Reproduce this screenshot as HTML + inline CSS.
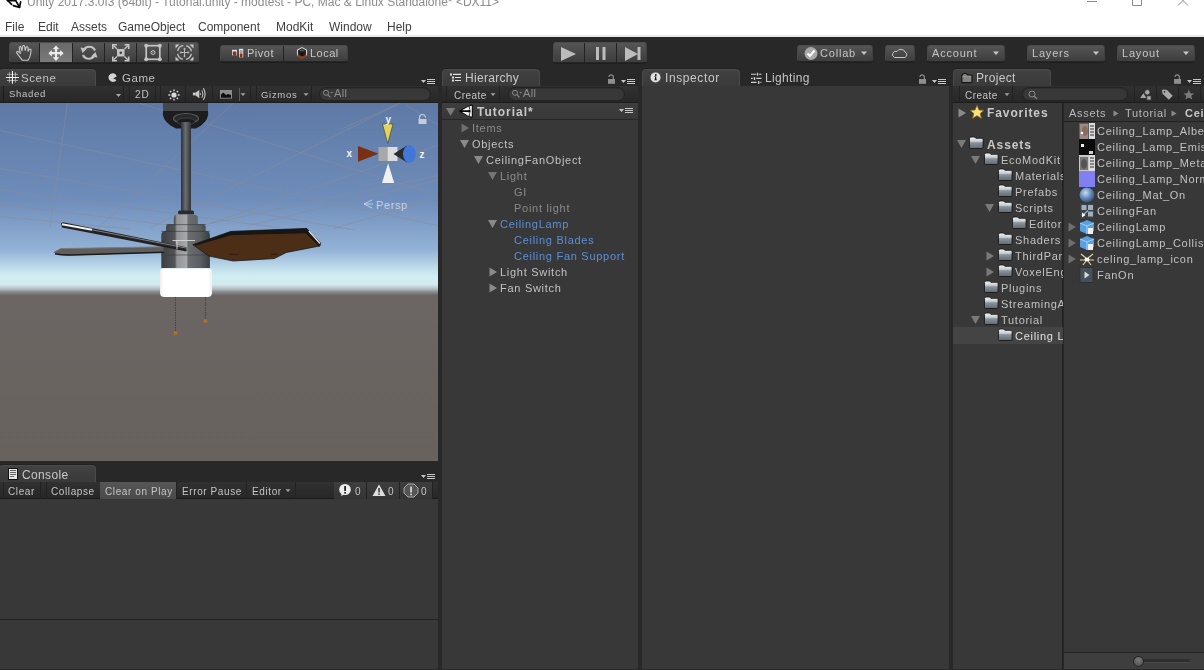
<!DOCTYPE html>
<html><head><meta charset="utf-8">
<style>
*{margin:0;padding:0;box-sizing:border-box}
body{-webkit-font-smoothing:antialiased}
html,body{width:1204px;height:670px;overflow:hidden;background:#282828;font-family:"Liberation Sans",sans-serif}
div,span{position:absolute}
span{will-change:transform}
.t{white-space:nowrap;font-size:11px;line-height:16px;letter-spacing:0.72px;color:#c2c2c2}
.s{white-space:nowrap;font-size:10px;line-height:16px;letter-spacing:0.45px;color:#c4c4c4}
#title{left:0;top:0;width:1204px;height:35px;background:#fff}
.menu{top:21px;font-size:12px;line-height:12px;color:#404040;white-space:nowrap}
.btn{background:linear-gradient(#555,#3d3d3d);border:1px solid #4c4c4c;border-bottom-color:#262626;border-left-color:#484848;border-right-color:#404040;border-radius:3px;box-shadow:0 1px 0 #1e1e1e}
.sep{width:1px;background:#222}
.tab{background:linear-gradient(#424242,#3a3a3a);border:1px solid #4a4a4a;border-bottom:none;border-radius:4px 4px 0 0;box-shadow:0 -1px 0 #222}
.ptb{background:linear-gradient(#313131,#272727);border-bottom:1px solid #1c1c1c}
.panel{background:#383838}
.hl{background:#222}
</style></head><body>
<div id="title"></div>
<div style="left:0;top:35px;width:1204px;height:2px;background:#eaeaea"></div>
<span class="menu" style="left:27px;top:-4px;color:#8c8c8c">Unity 2017.3.0f3 (64bit) - Tutorial.unity - modtest - PC, Mac &amp; Linux Standalone* &lt;DX11&gt;</span>
<span class="menu" style="left:5px">File</span>
<span class="menu" style="left:38px">Edit</span>
<span class="menu" style="left:71px">Assets</span>
<span class="menu" style="left:118px">GameObject</span>
<span class="menu" style="left:198px">Component</span>
<span class="menu" style="left:276px">ModKit</span>
<span class="menu" style="left:329px">Window</span>
<span class="menu" style="left:387px">Help</span>


<svg style="position:absolute;left:1080px;top:0" width="124" height="10">
 <path d="M7 1.5 H17" stroke="#8a8a8a" stroke-width="1"/>
 <path d="M52.5 -1 V5.5 H61.5 V-1" stroke="#8a8a8a" stroke-width="1" fill="none"/>
 <path d="M98 5.5 L103 0.5 L108 5.5 M103 0.5 L101 -1.5 M103 0.5 L105 -1.5" stroke="#8a8a8a" stroke-width="1" fill="none"/>
</svg>
<svg style="position:absolute;left:0;top:0" width="26" height="10"><g stroke="#0a0a0a" stroke-width="1.7" fill="none" stroke-linecap="round"><path d="M7.2 0 L11.6 4.4"/><path d="M7.5 0.6 H15.3"/><path d="M15.6 0.3 L19.4 7"/><path d="M20.6 1.8 L19.6 7.2"/><path d="M13.4 5.6 L19.5 7.4"/></g></svg>

<!-- TOOLBAR -->
<div style="left:0;top:37px;width:1204px;height:31px;background:#282828"></div>
<div class="btn" style="left:9px;top:42px;width:190px;height:21px"></div>
<div style="left:40px;top:43px;width:32px;height:19px;background:linear-gradient(#6a6a6a,#7a7a7a)"></div>
<div class="sep" style="left:39px;top:43px;height:19px"></div>
<div class="sep" style="left:72px;top:43px;height:19px"></div>
<div class="sep" style="left:104px;top:43px;height:19px"></div>
<div class="sep" style="left:136px;top:43px;height:19px"></div>
<div class="sep" style="left:168px;top:43px;height:19px"></div>
<svg style="position:absolute;left:0;top:37px" width="200" height="31" viewBox="0 37 200 31">
 <g fill="none" stroke="#c8c8c8" stroke-width="1.1" stroke-linejoin="round" stroke-linecap="round">
  <path d="M22.5 60.3 L16.8 53.2 Q16.3 51.5 18 51.3 L20.3 53.3 L19.2 47.6 Q19.6 46.2 20.8 46.8 L22 50.8 L22.6 46.2 Q23.5 45 24.6 46 L25.2 50.4 L26.3 47 Q27.3 46.4 28 47.4 L28 51.2 L29.5 49.2 Q30.7 48.8 31 50 L30.8 53 Q30 58 28 60.3 Z"/>
 </g>
 <path transform="translate(56 53.2) scale(1.1) translate(-56 -52.5)" d="M56 45.5 L59 48.8 L57 48.8 L57 51.5 L59.7 51.5 L59.7 49.5 L63 52.5 L59.7 55.5 L59.7 53.5 L57 53.5 L57 56.2 L59 56.2 L56 59.5 L53 56.2 L55 56.2 L55 53.5 L52.3 53.5 L52.3 55.5 L49 52.5 L52.3 49.5 L52.3 51.5 L55 51.5 L55 48.8 L53 48.8 Z" fill="#ececec"/>
 <g fill="none" stroke="#c2c2c2" stroke-width="2.2">
  <path d="M83.5 50.5 A6.3 6.3 0 0 1 95 50.5"/>
  <path d="M94.5 55 A6.3 6.3 0 0 1 83 55"/>
 </g>
 <path d="M80.5 47.5 L87 48.5 L82.5 53 Z M97.5 57.5 L91 56.5 L95.5 52 Z" fill="#c2c2c2"/>
 <rect x="117" y="49" width="7.5" height="7.5" fill="#c4c4c4"/><rect x="119.7" y="51.7" width="2.2" height="2.2" fill="#3a3a3a"/>
 <g stroke="#c4c4c4" stroke-width="1.4" fill="none">
  <path d="M117 49 L113.5 45.5 M124.5 49 L128 45.5 M117 56.5 L113.5 60 M124.5 56.5 L128 60"/>
  <path d="M112.8 49 V44.8 H117 M128.7 49 V44.8 H124.5 M112.8 56.5 V60.7 H117 M128.7 56.5 V60.7 H124.5" stroke-width="1.6"/>
 </g>
 <rect x="146.2" y="45.7" width="13.6" height="13.6" fill="none" stroke="#c4c4c4" stroke-width="1.7"/>
 <circle cx="146.2" cy="45.7" r="2" fill="#c4c4c4"/><circle cx="159.8" cy="45.7" r="2" fill="#c4c4c4"/>
 <circle cx="146.2" cy="59.3" r="2" fill="#c4c4c4"/><circle cx="159.8" cy="59.3" r="2" fill="#c4c4c4"/>
 <circle cx="153" cy="52.5" r="2" fill="none" stroke="#c4c4c4" stroke-width="1"/><circle cx="153" cy="52.5" r="0.6" fill="#c4c4c4"/>
 <circle cx="184.5" cy="52.5" r="7" fill="none" stroke="#b8b8b8" stroke-width="1.5" stroke-dasharray="8 3" stroke-dashoffset="-1.5"/>
 <path d="M184.5 48.5 V56.5 M180.5 52.5 H188.5" stroke="#b8b8b8" stroke-width="1"/>
 <path d="M184.5 47.5 L183 49.3 H186 Z M184.5 57.5 L183 55.7 H186 Z M179.5 52.5 L181.3 51 V54 Z M189.5 52.5 L187.7 51 V54 Z" fill="#b8b8b8"/>
 <path d="M175.5 44.5 H179.5 L175.5 48.5 Z M193.5 44.5 H189.5 L193.5 48.5 Z M175.5 60.5 H179.5 L175.5 56.5 Z M193.5 60.5 H189.5 L193.5 56.5 Z" fill="#c8c8c8"/>
</svg>
<div class="btn" style="left:220px;top:45px;width:128px;height:17px"></div>
<div class="sep" style="left:283px;top:46px;height:15px"></div>
<svg style="position:absolute;left:230px;top:46px" width="100" height="16">
 <rect x="2" y="3.8" width="5" height="5.5" fill="#e0e0e0"/><rect x="2.8" y="5.5" width="3.5" height="4" fill="#8a2e12"/>
 <rect x="9" y="2.8" width="4.2" height="8.6" fill="#e8e8e8"/><rect x="9.7" y="4" width="2.8" height="3" fill="#a0a0a0"/><rect x="9.7" y="7.4" width="2.8" height="4" fill="#8a2e12"/>
 <path d="M67.5 4 L72 1.6 L76.5 4 L76.5 9.5 L72 11.8 L67.5 9.5 Z" fill="#1e1e1e" stroke="#d4d4d4" stroke-width="1.1"/>
 <ellipse cx="72" cy="4.6" rx="2.6" ry="1" fill="#555"/>
 <path d="M72 5.8 V10" stroke="#111" stroke-width="1.5"/>
 <path d="M67.5 9.3 L72 11.6 L76.5 9.3" stroke="#9a3412" stroke-width="2" fill="none"/>
</svg>
<span class="t" style="left:247px;top:45px;font-size:11px;letter-spacing:0.5px;color:#c8c8c8">Pivot</span>
<span class="t" style="left:310px;top:45px;font-size:11px;letter-spacing:0.5px;color:#c8c8c8">Local</span>

<div class="btn" style="left:553px;top:42px;width:94px;height:21px"></div>
<div class="sep" style="left:584px;top:43px;height:19px"></div>
<div class="sep" style="left:616px;top:43px;height:19px"></div>
<svg style="position:absolute;left:553px;top:42px" width="94" height="21">
 <path d="M8 5 L23 12 L8 19 Z" fill="#bcbcbc"/>
 <rect x="43" y="5" width="3" height="13" fill="#bcbcbc"/><rect x="49.5" y="5" width="3" height="13" fill="#bcbcbc"/>
 <path d="M72 5 L85 12 L72 19 Z" fill="#bcbcbc"/><rect x="84.5" y="5" width="3" height="13" fill="#bcbcbc"/>
</svg>

<div class="btn" style="left:797px;top:45px;width:76px;height:17px"></div>
<svg style="position:absolute;left:804px;top:47px" width="14" height="14"><circle cx="7" cy="6.5" r="6.5" fill="#a8a8a8"/><path d="M3.5 6.5 L6 9 L10.5 3.5" stroke="#fff" stroke-width="2" fill="none"/></svg>
<span class="t" style="left:820px;top:45px;letter-spacing:0.8px;color:#c4c4c4">Collab</span>
<svg style="position:absolute;left:860px;top:51px" width="8" height="5"><path d="M1 0.5 H7 L4 4 Z" fill="#c8c8c8"/></svg>
<div class="btn" style="left:885px;top:45px;width:30px;height:17px"></div>
<svg style="position:absolute;left:891px;top:47px" width="18" height="13"><path d="M3.5 10.5 H14 A3 3 0 0 0 14 5 A4.5 4.5 0 0 0 6 4.5 A3 3 0 0 0 3.5 10.5 Z" fill="none" stroke="#c8c8c8" stroke-width="1"/></svg>
<div class="btn" style="left:927px;top:45px;width:78px;height:17px"></div>
<span class="t" style="left:932px;top:45px;letter-spacing:0.8px;color:#c4c4c4">Account</span>
<svg style="position:absolute;left:992px;top:51px" width="8" height="5"><path d="M1 0.5 H7 L4 4 Z" fill="#c8c8c8"/></svg>
<div class="btn" style="left:1027px;top:45px;width:78px;height:17px"></div>
<span class="t" style="left:1032px;top:45px;letter-spacing:0.8px;color:#c4c4c4">Layers</span>
<svg style="position:absolute;left:1092px;top:51px" width="8" height="5"><path d="M1 0.5 H7 L4 4 Z" fill="#c8c8c8"/></svg>
<div class="btn" style="left:1117px;top:45px;width:78px;height:17px"></div>
<span class="t" style="left:1122px;top:45px;letter-spacing:0.8px;color:#c4c4c4">Layout</span>
<svg style="position:absolute;left:1182px;top:51px" width="8" height="5"><path d="M1 0.5 H7 L4 4 Z" fill="#c8c8c8"/></svg>


<!-- PANEL BG -->
<div style="left:0;top:68px;width:1204px;height:602px;background:#282828"></div>
<!-- SCENE PANEL -->
<div class="tab" style="left:-1px;top:69px;width:97px;height:17px"></div>
<svg style="position:absolute;left:5px;top:70px" width="16" height="15"><path d="M4.46 2.2 V12.6 M10.43 2.2 V12.6 M2 4.4 H12.8 M2 10.5 H12.8" stroke="#a8a8a8" stroke-width="1"/><path d="M7.45 1 V13.8 M0.9 7.55 H14" stroke="#f0f0f0" stroke-width="1.1"/></svg>
<span class="t" style="left:21px;top:70px;font-size:11.5px;letter-spacing:0.55px;color:#c4c4c4">Scene</span>
<svg style="position:absolute;left:107.5px;top:73px" width="10" height="10"><path d="M4.5 0.2 A4.4 4.4 0 1 0 8.6 7 L5.2 5.6 L8.6 3.4 A4.4 4.4 0 0 0 4.5 0.2 Z" fill="#d4d4d4"/></svg>
<span class="t" style="left:122px;top:70px;font-size:11.5px;letter-spacing:0.55px;color:#c0c0c0">Game</span>
<svg style="position:absolute;left:421px;top:78px" width="14" height="7"><path d="M0 2 H5 L2.5 5 Z" fill="#c8c8c8"/><path d="M6 1.5 H14 M6 3.5 H14 M6 5.5 H14" stroke="#c8c8c8" stroke-width="1"/></svg>
<div class="ptb" style="left:0;top:86px;width:438px;height:17px"></div>
<div class="sep" style="left:3px;top:86px;height:17px;background:#1c1c1c"></div>
<span class="s" style="left:9px;top:86px;font-size:9.5px;letter-spacing:0.7px">Shaded</span>
<svg style="position:absolute;left:116px;top:94px" width="6" height="4"><path d="M0 0 H5 L2.5 3 Z" fill="#a8a8a8"/></svg>
<div class="sep" style="left:123px;top:86px;height:17px"></div>
<div class="sep" style="left:129px;top:86px;height:17px"></div>
<span class="s" style="left:134.5px;top:86.7px;font-size:10px;letter-spacing:1px">2D</span>
<div class="sep" style="left:155px;top:86px;height:17px"></div>
<div class="sep" style="left:160px;top:86px;height:17px"></div>
<svg style="position:absolute;left:166.5px;top:87.5px" width="14" height="14"><circle cx="7" cy="7" r="2.6" fill="#d8d8d8"/><path d="M7 1.4V3.2 M7 10.8V12.6 M1.4 7H3.2 M10.8 7H12.6 M3 3L4.2 4.2 M9.8 9.8L11 11 M3 11L4.2 9.8 M9.8 4.2L11 3" stroke="#d8d8d8" stroke-width="1.4"/></svg>
<div class="sep" style="left:185px;top:86px;height:17px"></div>
<svg style="position:absolute;left:191px;top:88px" width="16" height="14"><rect x="1.9" y="4.6" width="2.8" height="2.8" fill="#c8c8c8"/><path d="M4.6 4.6 L8.3 1.9 V10.3 L4.6 7.4 Z" fill="#c8c8c8"/><circle cx="9.5" cy="6.1" r="0.8" fill="#c8c8c8"/><path d="M10.9 2.4 Q13.1 6.1 10.9 9.8" stroke="#c8c8c8" stroke-width="1" fill="none"/><path d="M12.4 0.3 Q15.8 6.1 12.4 11.9" stroke="#c8c8c8" stroke-width="1.1" fill="none"/></svg>
<div class="sep" style="left:212px;top:86px;height:17px"></div>
<svg style="position:absolute;left:220px;top:90px" width="13" height="9"><rect x="0" y="0" width="12" height="8.6" fill="#8c8c8c"/><path d="M1 7.8 V4.5 L3.3 2.4 L6 5 L8 4 L11 5 V7.8 Z" fill="#0e0e0e"/></svg>
<div class="sep" style="left:238.5px;top:88px;height:13px;background:#5a5a5a"></div>
<svg style="position:absolute;left:240px;top:93px" width="7" height="4"><path d="M0.5 0.3 H5.5 L3 3 Z" fill="#a0a0a0"/></svg>
<div class="sep" style="left:249.5px;top:86px;height:17px"></div><div class="sep" style="left:255.5px;top:86px;height:17px"></div>
<span class="s" style="left:261px;top:86.7px;font-size:9.5px;letter-spacing:0.7px">Gizmos</span>
<svg style="position:absolute;left:303px;top:93px" width="7" height="4"><path d="M0.5 0.3 H5.5 L3 3 Z" fill="#a0a0a0"/></svg>
<div class="sep" style="left:311px;top:86px;height:17px"></div>
<div style="left:319px;top:87px;width:112px;height:14px;border-radius:7px;background:#383838;border:1px solid #232323;box-shadow:inset 0 1px 0 #2e2e2e"></div>
<svg style="position:absolute;left:322px;top:89px" width="14" height="10"><circle cx="4" cy="3.8" r="2.5" fill="none" stroke="#8a8a8a" stroke-width="1"/><path d="M5.8 5.7 L8.5 8.3" stroke="#8a8a8a" stroke-width="1.1"/><path d="M8.3 3 H11 L9.65 4.6 Z" fill="#8a8a8a"/></svg>
<span class="t" style="left:334px;top:85px;font-size:11px;letter-spacing:0.3px;color:#8e8e8e">All</span>

<!-- SCENE VIEW -->
<div style="left:0;top:103px;width:438px;height:358px;overflow:hidden;background:linear-gradient(#5e79a6 0%,#6f8dba 27%,#93b2d6 41%,#b5d2e6 45%,#c4e2ec 46.6%,#d3eef2 48.5%,#d2eaee 50.7%,#c3d3d6 51.35%,#aeb8bb 52.05%,#8e9296 52.65%,#767474 53.35%,#6b6663 53.8%,#68625e 100%)">
</div>


<svg style="position:absolute;left:0;top:103px" width="438" height="358" viewBox="0 103 438 358">
 <defs>
  <linearGradient id="rod" x1="0" x2="1"><stop offset="0" stop-color="#2e3034"/><stop offset="0.45" stop-color="#6a6d72"/><stop offset="1" stop-color="#303236"/></linearGradient>
  <linearGradient id="hous" gradientUnits="userSpaceOnUse" x1="161.3" y1="0" x2="209.9" y2="0"><stop offset="0" stop-color="#3c3f42"/><stop offset="0.28" stop-color="#525558"/><stop offset="0.32" stop-color="#929496"/><stop offset="0.52" stop-color="#a6a8aa"/><stop offset="0.55" stop-color="#6c6f72"/><stop offset="0.8" stop-color="#5c5f62"/><stop offset="1" stop-color="#3a3d40"/></linearGradient>
  <linearGradient id="glass" x1="0" y1="0" x2="1" y2="0"><stop offset="0" stop-color="#f0f0f0"/><stop offset="0.08" stop-color="#ffffff"/><stop offset="0.92" stop-color="#ffffff"/><stop offset="1" stop-color="#f0f0f0"/></linearGradient>
 </defs>
 <clipPath id="skyclip"><path d="M0 103 H438 V230 L0 230 Z"/></clipPath>
 <g stroke="#878d9a" stroke-opacity="0.65" stroke-width="0.9" fill="none" clip-path="url(#skyclip)">
  <path d="M67.5 103 L50 228"/>
  <path d="M139 103 L438 195"/>
  <path d="M0 130.6 L438 225.7"/>
  <path d="M0 168.4 L360 231"/>
  <path d="M0 189.9 L280 228"/>
  <path d="M0 204.2 L200 229"/>
  <path d="M0 216.5 L130 229"/>
  <path d="M98 228 L233.6 103"/>
  <path d="M150 228 L400.8 103"/>
  <path d="M209 223.7 L438 145"/>
  <path d="M200 225.7 L438 175.5"/>
  <path d="M248 225.7 L438 180"/>
  <path d="M334 228.5 L438 197.8"/>
  <path d="M340 129.6 L395.8 105"/>
  <path d="M405.7 105 L438 124.7"/>
 </g>
 <!-- canopy -->
 <rect x="163" y="103" width="45" height="8.5" fill="#44474c"/>
 <path d="M163 111 H208 Q209.5 119 201 125.5 L196 128.5 H176 L170.5 125.5 Q161.5 119 163 111 Z" fill="#1d1d1e"/>
 <ellipse cx="186" cy="118.5" rx="12.5" ry="5" fill="#29292b" stroke="#56595e" stroke-width="1.1"/>
 <ellipse cx="186" cy="121.5" rx="9" ry="3.5" fill="#1d1d1e" stroke="#3e4044" stroke-width="1"/>
 <rect x="181" y="122" width="10" height="92" fill="url(#rod)"/>
 <!-- housing -->
 <rect x="178" y="210.5" width="16" height="4" rx="1.5" fill="#2a2b2d"/>
 <path d="M173.8 224.5 V218 Q173.8 214.5 178 214.5 H193.6 Q197.8 214.5 197.8 218 V224.5 Z" fill="url(#hous)"/>
 <path d="M166 231.3 V227.5 Q166 224.3 170 224.3 H201.7 Q205.7 224.3 205.7 227.5 V231.3 Z" fill="url(#hous)"/>
 <path d="M161.3 268 V235.5 Q161.3 231.1 166 231.1 H205.2 Q209.9 231.1 209.9 235.5 V268 Z" fill="url(#hous)"/>
 <path d="M161.3 255 H209.9" stroke="#3a3c3e" stroke-width="1" opacity="0.6"/>
 <path d="M166 224.6 H205.7 M161.3 231.4 H209.9" stroke="#2e3032" stroke-width="0.8" opacity="0.7"/>
 <!-- left blades -->
 <path d="M53.5 252.3 L60.5 248.6 L163.5 246.8 L164 252.5 L72 255.3 Q58 255.3 53.5 252.3 Z" fill="#5f5e5d"/>
 <path d="M60.5 248.6 L163.5 246.8" stroke="#7c7b7a" stroke-width="1"/>
 <path d="M55 253.8 Q60 255 72 255 L164 252.3" stroke="#1a1a1a" stroke-width="1.4" fill="none"/>
 <path d="M61 223.2 L63 222.3 L186.5 247.3 L186.5 251.5 L62 227.5 Z" fill="#222"/>
 <path d="M62 224.2 L92 229.8" stroke="#f2f2f2" stroke-width="2"/>
 <path d="M92 229.8 L186 248" stroke="#8c8c8c" stroke-width="0.9"/>
 <path d="M172.5 240.5 H195" stroke="#d8d8d8" stroke-width="0.9"/>
 <path d="M177 240.5 V249" stroke="#e8e8e8" stroke-width="0.9"/>
 <!-- right blade -->
 <path d="M192.8 244.7 L230.8 231.4 L306.7 228.4 L320.5 242.9 L320 245.9 L286.2 252.5 L274.2 258.6 L233.2 261 L209.1 256.1 Z" fill="#4c2e16" stroke="#1a1a1a" stroke-width="0.8" stroke-linejoin="round"/>
 <path d="M192.8 244.7 L230.8 231.4 L306.7 228.4 L320.5 242.9 L319.5 246.5 L305.5 233.3 L230.8 235.2 L196 245.5 Z" fill="#161616"/>
 <path d="M308.8 231 L320 243.5" stroke="#e6e6e6" stroke-width="1.3"/>
 <path d="M229 254.3 H238.6 M271 254.3 H277.8" stroke="#2a1a10" stroke-width="0.9"/>
 <!-- glass -->
 <path d="M160 272 Q160 268.5 163.5 268.5 H208.5 Q212 268.5 212 272 V292.5 Q212 297 207.5 297 H164.5 Q160 297 160 292.5 Z" fill="url(#glass)"/>
 <!-- chains -->
 <path d="M175.5 297 V332 M205.5 297 V320" stroke="#3a3a3a" stroke-width="0.8" stroke-dasharray="1.5 1"/>
 <circle cx="175.5" cy="333" r="2" fill="#b07030"/>
 <circle cx="205.5" cy="321" r="2" fill="#b07030"/>
 <!-- gizmo -->
 <path d="M382.5 124 L393 124 L387.7 143.5 Z" fill="#e6d35a" stroke="#3a3a28" stroke-width="0.6"/>
 <path d="M358 146 L378.6 153.8 L358 161.7 Z" fill="#7a2e14"/>
 <rect x="378.5" y="147" width="9" height="14" fill="#a8a8a8"/>
 <rect x="387.5" y="147" width="10" height="14" fill="#dcdcdc"/>
 <path d="M393.5 154 L407 145.5 L407 162.5 Z" fill="#2a2a2a"/>
 <ellipse cx="409.3" cy="154" rx="6.3" ry="9" fill="#3f78d8"/>
 <path d="M382 183 L394.2 183 L388.1 163.3 Z" fill="#f0f0f0"/>
 <g font-family="Liberation Sans" font-weight="bold" font-size="10" fill="#f4f4f4">
  <text x="385.5" y="122.5">y</text><text x="346.5" y="157">x</text><text x="419.5" y="157.5">z</text>
 </g>
 <path d="M419.5 119 V117.5 A3 3 0 0 1 425.5 117.5" stroke="#c8ccd4" stroke-width="1.2" fill="none"/>
 <rect x="418.5" y="119" width="8" height="5" fill="#c8ccd4"/>
 <path d="M372 200 L364 204 L372 208 M364 204 H373" stroke="#c8d4e4" stroke-width="0.9" fill="none"/>
 <text x="376" y="208.5" font-family="Liberation Sans" font-size="11" letter-spacing="0.6" fill="#c8d0dc">Persp</text>
</svg>

<!-- CONSOLE -->
<div class="tab" style="left:-1px;top:465px;width:97px;height:17px"></div>
<svg style="position:absolute;left:8px;top:468px" width="10" height="12"><rect x="0.5" y="0.5" width="9" height="11" fill="#e6e6e6" stroke="#111" stroke-width="1"/><path d="M2 2.5 H8 M2 4.5 H8 M2 6.5 H8 M2 8.5 H6" stroke="#555" stroke-width="0.9"/></svg>
<span class="t" style="left:22px;top:467px;font-size:12px;letter-spacing:0.35px;color:#c8c8c8">Console</span>
<svg style="position:absolute;left:421px;top:473px" width="14" height="7"><path d="M0 2 H5 L2.5 5 Z" fill="#c8c8c8"/><path d="M6 1.5 H14 M6 3.5 H14 M6 5.5 H14" stroke="#c8c8c8" stroke-width="1"/></svg>
<div class="ptb" style="left:0;top:482px;width:438px;height:17px"></div>
<div class="sep" style="left:3px;top:482px;height:17px"></div>
<span class="s" style="left:8px;top:483.5px;font-size:10px;letter-spacing:0.6px">Clear</span>
<div class="sep" style="left:40px;top:482px;height:17px"></div>
<div class="sep" style="left:46px;top:482px;height:17px"></div>
<span class="s" style="left:51px;top:483.5px;font-size:10px;letter-spacing:0.6px">Collapse</span>
<div style="left:100px;top:482px;width:76px;height:17px;background:linear-gradient(#565656,#4a4a4a)"></div>
<span class="s" style="left:105px;top:483.5px;font-size:10px;letter-spacing:0.6px">Clear on Play</span>
<div class="sep" style="left:176px;top:482px;height:17px"></div>
<span class="s" style="left:182px;top:483.5px;font-size:10px;letter-spacing:0.6px">Error Pause</span>
<div class="sep" style="left:246px;top:482px;height:17px"></div>
<span class="s" style="left:252px;top:483.5px;font-size:10px;letter-spacing:0.6px">Editor</span>
<svg style="position:absolute;left:285px;top:489px" width="7" height="4"><path d="M0.5 0.3 H5.5 L3 3 Z" fill="#a0a0a0"/></svg>
<div class="sep" style="left:295px;top:482px;height:17px"></div>
<div style="left:334px;top:482px;width:98px;height:17px;background:linear-gradient(#3e3e3e,#343434)"></div>
<div class="sep" style="left:366px;top:482px;height:17px"></div>
<div class="sep" style="left:399px;top:482px;height:17px"></div>
<div class="sep" style="left:432px;top:482px;height:17px"></div>
<svg style="position:absolute;left:338px;top:483px" width="94" height="15">
 <ellipse cx="7" cy="6.5" rx="5.8" ry="5.5" fill="#eee"/><path d="M4 10 L3 13 L7 11 Z" fill="#eee"/><rect x="6.2" y="3" width="1.8" height="5" fill="#222"/><rect x="6.2" y="9" width="1.8" height="1.6" fill="#222"/>
 <path d="M41 1.5 L47.5 13 H34.5 Z" fill="#ddd"/><rect x="40.3" y="5" width="1.5" height="4.5" fill="#333"/><rect x="40.3" y="10.5" width="1.5" height="1.4" fill="#333"/>
 <path d="M70 1 H76 L80 5 V10 L76 14 H70 L66 10 V5 Z" fill="#555" stroke="#aaa" stroke-width="1"/><rect x="72.3" y="3.5" width="1.5" height="6" fill="#eee"/><rect x="72.3" y="10.7" width="1.5" height="1.5" fill="#eee"/>
</svg>
<span class="s" style="left:355px;top:483.5px;font-size:10px">0</span>
<span class="s" style="left:388px;top:483.5px;font-size:10px">0</span>
<span class="s" style="left:421px;top:483.5px;font-size:10px">0</span>
<div class="panel" style="left:0;top:499px;width:438px;height:170px"></div>
<div style="left:0;top:619px;width:438px;height:1px;background:#222"></div>

<!-- HIERARCHY -->
<div class="tab" style="left:442px;top:69px;width:98px;height:17px"></div>
<svg style="position:absolute;left:449px;top:72px" width="14" height="11"><path d="M1 1.4h2v2h-2z M3 4.5h2v2h-2z M3 7.5h2v2h-2z" fill="#e0e0e0"/><path d="M4 2.4 H12 M6 5.5 H12 M6 8.5 H12" stroke="#e0e0e0" stroke-width="1.2"/></svg>
<span class="t" style="left:465px;top:69.8px;font-size:12px;letter-spacing:0.3px;color:#c8c8c8">Hierarchy</span>
<svg style="position:absolute;left:607px;top:73px" width="10" height="12"><path d="M1.9 3.9 A2.3 2.3 0 0 1 6.3 3.3 V6.5" stroke="#8e8e8e" stroke-width="1.2" fill="none"/><rect x="1" y="6" width="7" height="4.8" fill="#8e8e8e"/></svg>
<svg style="position:absolute;left:621px;top:78px" width="14" height="7"><path d="M0 2 H5 L2.5 5 Z" fill="#c8c8c8"/><path d="M6 1.5 H14 M6 3.5 H14 M6 5.5 H14" stroke="#c8c8c8" stroke-width="1"/></svg>
<div class="ptb" style="left:442px;top:86px;width:196px;height:17px"></div>
<div class="sep" style="left:446px;top:86px;height:17px"></div>
<span class="s" style="left:454px;top:87.5px;font-size:10px;letter-spacing:0.45px">Create</span>
<svg style="position:absolute;left:490px;top:93px" width="7" height="4"><path d="M0.5 0.3 H5.5 L3 3 Z" fill="#a0a0a0"/></svg>
<div class="sep" style="left:499px;top:86px;height:17px"></div>
<div style="left:508px;top:87px;width:117px;height:14px;border-radius:7px;background:#383838;border:1px solid #232323;box-shadow:inset 0 1px 0 #2e2e2e"></div>
<svg style="position:absolute;left:511px;top:89px" width="14" height="10"><circle cx="4" cy="3.8" r="2.5" fill="none" stroke="#8a8a8a" stroke-width="1"/><path d="M5.8 5.7 L8.5 8.3" stroke="#8a8a8a" stroke-width="1.1"/><path d="M8.3 3 H11 L9.65 4.6 Z" fill="#8a8a8a"/></svg>
<span class="t" style="left:523px;top:85px;font-size:11px;letter-spacing:0.3px;color:#8e8e8e">All</span>
<div class="panel" style="left:442px;top:103px;width:196px;height:566px"></div>
<div style="left:442px;top:103px;width:196px;height:17px;background:linear-gradient(#3e3e3e,#383838);border-bottom:1px solid #262626"></div>


<!-- HIERARCHY ROWS -->
<svg style="position:absolute;left:445px;top:107px" width="12" height="11"><path d="M1 1 H10.2 L5.6 8.8 Z" fill="#7a7a7a"/></svg>
<svg style="position:absolute;left:458px;top:103px" width="17" height="17"><path d="M1.3 8.2 Q1 7.7 1.6 7.3 L13.2 1.6 Q14.8 1 14.8 2.6 V13.8 Q14.8 15.4 13.2 14.8 L1.6 9.1 Q1 8.7 1.3 8.2 Z" fill="#0a0a0a"/><path d="M4 7.3 L10.5 3.5 L11.8 7 L8.6 7.3 Z M4 9.1 L8.6 9.1 L11.8 9.5 L10.5 13 Z M11.5 3.2 L13.8 2.8 L13.8 13.6 L11.5 13.2 L12.6 8.2 Z" fill="#f4f4f4"/></svg>
<span class="t" style="left:477px;top:104px;font-size:12px;font-weight:bold;letter-spacing:1px;color:#c8c8c8">Tutorial*</span>
<svg style="position:absolute;left:619px;top:107px" width="14" height="7"><path d="M0 2 H5 L2.5 5 Z" fill="#c8c8c8"/><path d="M6 1.5 H14 M6 3.5 H14 M6 5.5 H14" stroke="#c8c8c8" stroke-width="1"/></svg>
<svg style="position:absolute;left:460px;top:123px" width="10" height="10"><path d="M1.5 0.5 V9.5 L9 5 Z" fill="#6e6e6e"/></svg>
<span class="t" style="left:472px;top:120px;color:#8a8a8a">Items</span>
<svg style="position:absolute;left:459px;top:139px" width="11" height="10"><path d="M1 1 H10 L5.5 9 Z" fill="#8a8a8a"/></svg>
<span class="t" style="left:472px;top:136px;color:#c2c2c2">Objects</span>
<svg style="position:absolute;left:473px;top:155px" width="11" height="10"><path d="M1 1 H10 L5.5 9 Z" fill="#8a8a8a"/></svg>
<span class="t" style="left:486px;top:152px;color:#c2c2c2">CeilingFanObject</span>
<svg style="position:absolute;left:487px;top:171px" width="11" height="10"><path d="M1 1 H10 L5.5 9 Z" fill="#757575"/></svg>
<span class="t" style="left:500px;top:168px;color:#8e8e8e">Light</span>
<span class="t" style="left:514px;top:184px;color:#8a8a8a">GI</span>
<span class="t" style="left:514px;top:200px;color:#8a8a8a">Point light</span>
<svg style="position:absolute;left:487px;top:219px" width="11" height="10"><path d="M1 1 H10 L5.5 9 Z" fill="#8a8a8a"/></svg>
<span class="t" style="left:500px;top:216px;color:#5a8fd8">CeilingLamp</span>
<span class="t" style="left:514px;top:232px;color:#5a8fd8">Ceiling Blades</span>
<span class="t" style="left:514px;top:248px;color:#5a8fd8">Ceiling Fan Support</span>
<svg style="position:absolute;left:488px;top:267px" width="10" height="10"><path d="M1.5 0.5 V9.5 L9 5 Z" fill="#8a8a8a"/></svg>
<span class="t" style="left:500px;top:264px;color:#c2c2c2">Light Switch</span>
<svg style="position:absolute;left:488px;top:283px" width="10" height="10"><path d="M1.5 0.5 V9.5 L9 5 Z" fill="#8a8a8a"/></svg>
<span class="t" style="left:500px;top:280px;color:#c2c2c2">Fan Switch</span>

<!-- INSPECTOR -->
<div class="tab" style="left:642px;top:69px;width:98px;height:17px"></div>
<svg style="position:absolute;left:650px;top:72px" width="12" height="12"><circle cx="5.5" cy="5.4" r="5" fill="#dedede"/><path d="M4.3 4.4 H6.3 V7.6 H7 V8.3 H4.3 V7.6 H5 V5.1 H4.3 Z" fill="#111"/><circle cx="5.8" cy="3" r="0.9" fill="#111"/></svg>
<span class="t" style="left:665px;top:69.8px;font-size:12px;letter-spacing:0.6px;color:#c8c8c8">Inspector</span>
<svg style="position:absolute;left:750px;top:72px" width="13" height="13"><g stroke="#d0d0d0" stroke-width="1.1"><path d="M1 2.2 H6 M9 2.2 H11.5 M1 6.4 H2.8 M6.3 6.4 H11.5 M1 10.4 H6.6 M10.4 10.4 H11.4"/><path d="M7.5 0.8 V3.8 M4.5 5 V8 M8.7 9 V12" stroke-width="1.3"/></g></svg>
<span class="t" style="left:765px;top:69.8px;font-size:12px;letter-spacing:0.35px;color:#c4c4c4">Lighting</span>
<svg style="position:absolute;left:918px;top:73px" width="10" height="12"><path d="M1.9 3.9 A2.3 2.3 0 0 1 6.3 3.3 V6.5" stroke="#8e8e8e" stroke-width="1.2" fill="none"/><rect x="1" y="6" width="7" height="4.8" fill="#8e8e8e"/></svg>
<svg style="position:absolute;left:932px;top:78px" width="14" height="7"><path d="M0 2 H5 L2.5 5 Z" fill="#c8c8c8"/><path d="M6 1.5 H14 M6 3.5 H14 M6 5.5 H14" stroke="#c8c8c8" stroke-width="1"/></svg>
<div class="panel" style="left:642px;top:86px;width:307px;height:583px"></div>

<!-- PROJECT -->
<div class="tab" style="left:953px;top:69px;width:98px;height:17px"></div>
<svg style="position:absolute;left:960px;top:72px" width="14" height="12"><path d="M1.8 3.5 Q2.5 1.5 4.5 1.5 H5.5 Q6.5 1.5 7.5 3 H11 Q12 3 12 4 V9.8 Q12 10.6 11 10.6 H2.5 Q1.8 10.6 1.8 9.8 Z" fill="#86827e" stroke="#141414" stroke-width="1.2"/><path d="M2.5 4.8 H11.3" stroke="#a8a8a8" stroke-width="0.6"/></svg>
<span class="t" style="left:976px;top:69.8px;font-size:12px;letter-spacing:0.35px;color:#c8c8c8">Project</span>
<svg style="position:absolute;left:1173px;top:73px" width="10" height="12"><path d="M1.9 3.9 A2.3 2.3 0 0 1 6.3 3.3 V6.5" stroke="#8e8e8e" stroke-width="1.2" fill="none"/><rect x="1" y="6" width="7" height="4.8" fill="#8e8e8e"/></svg>
<svg style="position:absolute;left:1187px;top:78px" width="14" height="7"><path d="M0 2 H5 L2.5 5 Z" fill="#c8c8c8"/><path d="M6 1.5 H14 M6 3.5 H14 M6 5.5 H14" stroke="#c8c8c8" stroke-width="1"/></svg>
<div class="ptb" style="left:953px;top:86px;width:251px;height:17px"></div>
<div class="sep" style="left:959px;top:86px;height:17px"></div>
<span class="s" style="left:965px;top:87.5px;font-size:10px;letter-spacing:0.45px">Create</span>
<svg style="position:absolute;left:1004px;top:93px" width="7" height="4"><path d="M0.5 0.3 H5.5 L3 3 Z" fill="#a0a0a0"/></svg>
<div class="sep" style="left:1012px;top:86px;height:17px"></div>
<div style="left:1022px;top:87px;width:106px;height:14px;border-radius:7px;background:#383838;border:1px solid #232323;box-shadow:inset 0 1px 0 #2e2e2e"></div>
<svg style="position:absolute;left:1028px;top:90px" width="10" height="10"><circle cx="4" cy="4" r="3" fill="none" stroke="#8a8a8a" stroke-width="1"/><path d="M6 6 L9 9" stroke="#8a8a8a" stroke-width="1.2"/></svg>
<div class="sep" style="left:1134px;top:86px;height:17px"></div>
<div class="sep" style="left:1156px;top:86px;height:17px"></div>
<div class="sep" style="left:1178px;top:86px;height:17px"></div><div class="sep" style="left:1200px;top:86px;height:17px"></div>
<svg style="position:absolute;left:1130px;top:84px" width="74" height="20">
 <path d="M10.2 13.9 L13.4 9.3 L16.4 13.9 Z" fill="#a8a8a8"/>
 <circle cx="17.3" cy="8.3" r="2.7" fill="#a8a8a8" stroke="#2d2d2d" stroke-width="0.8"/>
 <rect x="16.8" y="11.8" width="4.3" height="4.3" fill="#a8a8a8" stroke="#2d2d2d" stroke-width="0.8"/>
 <path d="M31.8 6.5 L33.5 5.5 L37 6 L42.7 11.8 L38.8 15.8 L32.6 9.8 Z" fill="#a8a8a8"/><circle cx="34.5" cy="7.8" r="0.9" fill="#2b2b2b"/>
 <path d="M58.8 5.5 L60.3 9.2 L64.2 9.4 L61.2 11.8 L62.3 15.6 L58.8 13.4 L55.3 15.6 L56.4 11.8 L53.4 9.4 L57.3 9.2 Z" fill="#7c7c7c"/>
</svg>
<div class="panel" style="left:953px;top:103px;width:110px;height:566px"></div>

<div class="panel" style="left:1064px;top:103px;width:140px;height:549px"></div>
<div style="left:1064px;top:103px;width:140px;height:19px;background:#353535;border-bottom:1px solid #222"></div>
<div style="left:1064px;top:652px;width:140px;height:17px;background:#3e3e3e;border-top:1px solid #222"></div>
<div style="left:1062px;top:103px;width:1px;height:566px;background:#222"></div>
<div style="left:1138px;top:659px;width:52px;height:4px;border-radius:2px;background:#2e2e2e;border-bottom:1px solid #4a4a4a"></div>
<div style="left:1133px;top:655.5px;width:11px;height:11px;border-radius:50%;background:radial-gradient(circle at 50% 30%,#7a7a7a,#4a4a4a);border:1px solid #222"></div>
<div style="left:953px;top:327px;width:110px;height:17px;background:#444"></div>

<svg width="0" height="0" style="position:absolute"><defs><linearGradient id="fg" x1="0" y1="0" x2="0" y2="1"><stop offset="0" stop-color="#f0f0f0"/><stop offset="0.35" stop-color="#d0d4d8"/><stop offset="0.5" stop-color="#8a949c"/><stop offset="1" stop-color="#5e6a74"/></linearGradient></defs></svg>
<svg style="position:absolute;left:957px;top:108px" width="10" height="10"><path d="M1.5 0.5 V9.5 L9 5 Z" fill="#8a8a8a"/></svg>
<svg style="position:absolute;left:969px;top:104px" width="16" height="15"><path d="M8 1 L10 6 L15 6.3 L11.2 9.5 L12.5 14.5 L8 11.7 L3.5 14.5 L4.8 9.5 L1 6.3 L6 6 Z" fill="#f5e27a" stroke="#8a5a1a" stroke-width="0.8"/></svg>
<span class="t" style="left:987px;top:105px;font-size:12px;font-weight:bold;letter-spacing:0.9px;color:#c8c8c8">Favorites</span>
<svg style="position:absolute;left:956px;top:139px" width="11" height="10"><path d="M1 1 H10 L5.5 9 Z" fill="#7a7a7a"/></svg>
<svg style="position:absolute;left:969px;top:136px" width="15" height="13"><path d="M0.5 2.5 Q0.5 1 2 1 H5.5 L6.8 2.3 H13 Q14 2.3 14 3.3 V11.5 Q14 12.5 13 12.5 H1.5 Q0.5 12.5 0.5 11.5 Z" fill="url(#fg)" stroke="#111" stroke-width="0.8"/><path d="M1 5 H13.5" stroke="#ccc" stroke-width="0.8"/></svg>
<span class="t" style="left:987px;top:136.5px;font-size:12px;font-weight:bold;letter-spacing:0.9px;color:#c8c8c8">Assets</span>
<div style="left:953px;top:103px;width:110px;height:566px;overflow:hidden">
<svg style="position:absolute;left:17px;top:52px" width="11" height="10"><path d="M1 1 H10 L5.5 9 Z" fill="#7a7a7a"/></svg>
<svg style="position:absolute;left:31px;top:49px" width="15" height="13"><path d="M0.5 2.5 Q0.5 1 2 1 H5.5 L6.8 2.3 H13 Q14 2.3 14 3.3 V11.5 Q14 12.5 13 12.5 H1.5 Q0.5 12.5 0.5 11.5 Z" fill="url(#fg)" stroke="#111" stroke-width="0.8"/><path d="M1 5 H13.5" stroke="#ccc" stroke-width="0.8"/></svg>
<span class="t" style="left:48px;top:49px;color:#c2c2c2">EcoModKit</span>
<svg style="position:absolute;left:45px;top:65px" width="15" height="13"><path d="M0.5 2.5 Q0.5 1 2 1 H5.5 L6.8 2.3 H13 Q14 2.3 14 3.3 V11.5 Q14 12.5 13 12.5 H1.5 Q0.5 12.5 0.5 11.5 Z" fill="url(#fg)" stroke="#111" stroke-width="0.8"/><path d="M1 5 H13.5" stroke="#ccc" stroke-width="0.8"/></svg>
<span class="t" style="left:62px;top:65px;color:#c2c2c2">Materials</span>
<svg style="position:absolute;left:45px;top:81px" width="15" height="13"><path d="M0.5 2.5 Q0.5 1 2 1 H5.5 L6.8 2.3 H13 Q14 2.3 14 3.3 V11.5 Q14 12.5 13 12.5 H1.5 Q0.5 12.5 0.5 11.5 Z" fill="url(#fg)" stroke="#111" stroke-width="0.8"/><path d="M1 5 H13.5" stroke="#ccc" stroke-width="0.8"/></svg>
<span class="t" style="left:62px;top:81px;color:#c2c2c2">Prefabs</span>
<svg style="position:absolute;left:31px;top:100px" width="11" height="10"><path d="M1 1 H10 L5.5 9 Z" fill="#7a7a7a"/></svg>
<svg style="position:absolute;left:45px;top:97px" width="15" height="13"><path d="M0.5 2.5 Q0.5 1 2 1 H5.5 L6.8 2.3 H13 Q14 2.3 14 3.3 V11.5 Q14 12.5 13 12.5 H1.5 Q0.5 12.5 0.5 11.5 Z" fill="url(#fg)" stroke="#111" stroke-width="0.8"/><path d="M1 5 H13.5" stroke="#ccc" stroke-width="0.8"/></svg>
<span class="t" style="left:62px;top:97px;color:#c2c2c2">Scripts</span>
<svg style="position:absolute;left:59px;top:113px" width="15" height="13"><path d="M0.5 2.5 Q0.5 1 2 1 H5.5 L6.8 2.3 H13 Q14 2.3 14 3.3 V11.5 Q14 12.5 13 12.5 H1.5 Q0.5 12.5 0.5 11.5 Z" fill="url(#fg)" stroke="#111" stroke-width="0.8"/><path d="M1 5 H13.5" stroke="#ccc" stroke-width="0.8"/></svg>
<span class="t" style="left:76px;top:113px;color:#c2c2c2">Editor</span>
<svg style="position:absolute;left:45px;top:129px" width="15" height="13"><path d="M0.5 2.5 Q0.5 1 2 1 H5.5 L6.8 2.3 H13 Q14 2.3 14 3.3 V11.5 Q14 12.5 13 12.5 H1.5 Q0.5 12.5 0.5 11.5 Z" fill="url(#fg)" stroke="#111" stroke-width="0.8"/><path d="M1 5 H13.5" stroke="#ccc" stroke-width="0.8"/></svg>
<span class="t" style="left:62px;top:129px;color:#c2c2c2">Shaders</span>
<svg style="position:absolute;left:32px;top:148px" width="10" height="10"><path d="M1.5 0.5 V9.5 L9 5 Z" fill="#7a7a7a"/></svg>
<svg style="position:absolute;left:45px;top:145px" width="15" height="13"><path d="M0.5 2.5 Q0.5 1 2 1 H5.5 L6.8 2.3 H13 Q14 2.3 14 3.3 V11.5 Q14 12.5 13 12.5 H1.5 Q0.5 12.5 0.5 11.5 Z" fill="url(#fg)" stroke="#111" stroke-width="0.8"/><path d="M1 5 H13.5" stroke="#ccc" stroke-width="0.8"/></svg>
<span class="t" style="left:62px;top:145px;color:#c2c2c2">ThirdParty</span>
<svg style="position:absolute;left:32px;top:164px" width="10" height="10"><path d="M1.5 0.5 V9.5 L9 5 Z" fill="#7a7a7a"/></svg>
<svg style="position:absolute;left:45px;top:161px" width="15" height="13"><path d="M0.5 2.5 Q0.5 1 2 1 H5.5 L6.8 2.3 H13 Q14 2.3 14 3.3 V11.5 Q14 12.5 13 12.5 H1.5 Q0.5 12.5 0.5 11.5 Z" fill="url(#fg)" stroke="#111" stroke-width="0.8"/><path d="M1 5 H13.5" stroke="#ccc" stroke-width="0.8"/></svg>
<span class="t" style="left:62px;top:161px;color:#c2c2c2">VoxelEngine</span>
<svg style="position:absolute;left:31px;top:177px" width="15" height="13"><path d="M0.5 2.5 Q0.5 1 2 1 H5.5 L6.8 2.3 H13 Q14 2.3 14 3.3 V11.5 Q14 12.5 13 12.5 H1.5 Q0.5 12.5 0.5 11.5 Z" fill="url(#fg)" stroke="#111" stroke-width="0.8"/><path d="M1 5 H13.5" stroke="#ccc" stroke-width="0.8"/></svg>
<span class="t" style="left:48px;top:177px;color:#c2c2c2">Plugins</span>
<svg style="position:absolute;left:31px;top:193px" width="15" height="13"><path d="M0.5 2.5 Q0.5 1 2 1 H5.5 L6.8 2.3 H13 Q14 2.3 14 3.3 V11.5 Q14 12.5 13 12.5 H1.5 Q0.5 12.5 0.5 11.5 Z" fill="url(#fg)" stroke="#111" stroke-width="0.8"/><path d="M1 5 H13.5" stroke="#ccc" stroke-width="0.8"/></svg>
<span class="t" style="left:48px;top:193px;color:#c2c2c2">StreamingAssets</span>
<svg style="position:absolute;left:17px;top:212px" width="11" height="10"><path d="M1 1 H10 L5.5 9 Z" fill="#7a7a7a"/></svg>
<svg style="position:absolute;left:31px;top:209px" width="15" height="13"><path d="M0.5 2.5 Q0.5 1 2 1 H5.5 L6.8 2.3 H13 Q14 2.3 14 3.3 V11.5 Q14 12.5 13 12.5 H1.5 Q0.5 12.5 0.5 11.5 Z" fill="url(#fg)" stroke="#111" stroke-width="0.8"/><path d="M1 5 H13.5" stroke="#ccc" stroke-width="0.8"/></svg>
<span class="t" style="left:48px;top:209px;color:#c2c2c2">Tutorial</span>
<svg style="position:absolute;left:45px;top:225px" width="15" height="13"><path d="M0.5 2.5 Q0.5 1 2 1 H5.5 L6.8 2.3 H13 Q14 2.3 14 3.3 V11.5 Q14 12.5 13 12.5 H1.5 Q0.5 12.5 0.5 11.5 Z" fill="url(#fg)" stroke="#111" stroke-width="0.8"/><path d="M1 5 H13.5" stroke="#ccc" stroke-width="0.8"/></svg>
<span class="t" style="left:62px;top:225px;color:#e0e0e0">Ceiling Lamp</span>
</div>
<span class="t" style="left:1069px;top:104.5px;color:#b8b8b8">Assets</span>
<svg style="position:absolute;left:1113px;top:110px" width="6" height="7"><path d="M0.5 0.5 V6.5 L5.5 3.5 Z" fill="#8a8a8a"/></svg>
<span class="t" style="left:1125px;top:104.5px;color:#b8b8b8">Tutorial</span>
<svg style="position:absolute;left:1171px;top:110px" width="6" height="7"><path d="M0.5 0.5 V6.5 L5.5 3.5 Z" fill="#8a8a8a"/></svg>
<span class="t" style="left:1185px;top:104.5px;font-weight:bold;color:#c8c8c8">Ceiling Lamp</span>
<svg width="0" height="0" style="position:absolute"><defs><radialGradient id="sph" cx="0.4" cy="0.35" r="0.7"><stop offset="0" stop-color="#c8dcf0"/><stop offset="0.5" stop-color="#6a90c0"/><stop offset="1" stop-color="#2a4a70"/></radialGradient></defs></svg>
<div style="left:1064px;top:121.7px;width:140px;height:530px;overflow:hidden">
<svg style="position:absolute;left:15px;top:1px" width="16" height="16"><rect x="0" y="0" width="16" height="16" fill="#5a6068"/><rect x="1" y="1" width="8" height="15" fill="#9a8a84"/><ellipse cx="6" cy="8" rx="3" ry="5" fill="#8a6a5a"/><rect x="10" y="0" width="6" height="16" fill="#ddd"/><path d="M11 3h4M11 6h4M11 9h4M11 12h4" stroke="#333" stroke-width="1"/><circle cx="3" cy="10" r="1.3" fill="#fff"/></svg>
<span class="t" style="left:33px;top:1px;color:#c2c2c2">Ceiling_Lamp_Albedo</span>
<svg style="position:absolute;left:15px;top:17px" width="16" height="16"><rect x="0" y="0" width="16" height="16" fill="#0a0a0a"/><rect x="2" y="5" width="3" height="3" fill="#eee"/><rect x="10" y="12" width="4" height="3" fill="#ccc"/></svg>
<span class="t" style="left:33px;top:17px;color:#c2c2c2">Ceiling_Lamp_Emission</span>
<svg style="position:absolute;left:15px;top:33px" width="16" height="16"><rect x="0" y="0" width="16" height="16" fill="#c8c8c8"/><rect x="1" y="2" width="8" height="13" fill="#777"/><ellipse cx="5" cy="9" rx="3" ry="5" fill="#555"/><rect x="10" y="0" width="6" height="16" fill="#ddd"/><path d="M11 3h4M11 6h4M11 9h4M11 12h4" stroke="#333" stroke-width="1"/></svg>
<span class="t" style="left:33px;top:33px;color:#c2c2c2">Ceiling_Lamp_Metallic</span>
<svg style="position:absolute;left:15px;top:49px" width="16" height="16"><rect x="0" y="0" width="16" height="16" fill="#8080f0"/></svg>
<span class="t" style="left:33px;top:49px;color:#c2c2c2">Ceiling_Lamp_Normal</span>
<svg style="position:absolute;left:15px;top:65px" width="16" height="16"><circle cx="8" cy="8" r="7.5" fill="url(#sph)"/></svg>
<span class="t" style="left:33px;top:65px;color:#c2c2c2">Ceiling_Mat_On</span>
<svg style="position:absolute;left:15px;top:81px" width="16" height="16"><rect x="1" y="0.5" width="14" height="15" fill="#3a4148"/><path d="M2.5 2h5v5h-5z M9 2h5v5h-5z M9 8.5h5v5h-5z" fill="#9fb0bc"/><path d="M3 13 L9 7.5" stroke="#9fb0bc" stroke-width="1.3"/><path d="M3 9.5 L6.5 12 L3 14.5 Z" fill="#fff"/></svg>
<span class="t" style="left:33px;top:81px;color:#c2c2c2">CeilingFan</span>
<svg style="position:absolute;left:3px;top:100px" width="10" height="10"><path d="M1.5 0.5 V9.5 L9 5 Z" fill="#6e6e6e"/></svg>
<svg style="position:absolute;left:15px;top:97px" width="16" height="16"><path d="M1 4 L8 1 L15 4 V12 L8 15 L1 12 Z" fill="#5aa0e0"/><path d="M1 4 L8 7 L15 4 M8 7 V15" stroke="#9ed0ff" stroke-width="1" fill="none"/><path d="M9 9 H14 V15 H9 Z" fill="#f0f0f0"/></svg>
<span class="t" style="left:33px;top:97px;color:#c2c2c2">CeilingLamp</span>
<svg style="position:absolute;left:3px;top:116px" width="10" height="10"><path d="M1.5 0.5 V9.5 L9 5 Z" fill="#6e6e6e"/></svg>
<svg style="position:absolute;left:15px;top:113px" width="16" height="16"><path d="M1 4 L8 1 L15 4 V12 L8 15 L1 12 Z" fill="#5aa0e0"/><path d="M1 4 L8 7 L15 4 M8 7 V15" stroke="#9ed0ff" stroke-width="1" fill="none"/><path d="M9 9 H14 V15 H9 Z" fill="#f0f0f0"/></svg>
<span class="t" style="left:33px;top:113px;color:#c2c2c2">CeilingLamp_Collision</span>
<svg style="position:absolute;left:3px;top:132px" width="10" height="10"><path d="M1.5 0.5 V9.5 L9 5 Z" fill="#6e6e6e"/></svg>
<svg style="position:absolute;left:15px;top:129px" width="16" height="16"><path d="M2 3 L7 7 M14 3 L9 7 M1 9 H6 M10 9 H15 M4 14 L7 10 M12 14 L9 10" stroke="#e8d0a0" stroke-width="1.2"/><ellipse cx="8" cy="8.5" rx="2.5" ry="2" fill="#fff"/></svg>
<span class="t" style="left:33px;top:129px;color:#c2c2c2">celing_lamp_icon</span>
<svg style="position:absolute;left:15px;top:145px" width="16" height="16"><rect x="1" y="0.5" width="13" height="15" fill="#46505a" stroke="#2a2f34" stroke-width="0.8"/><path d="M5.5 4.5 L10.5 8 L5.5 11.5 Z" fill="#d8d8d8"/></svg>
<span class="t" style="left:33px;top:145px;color:#c2c2c2">FanOn</span>
</div>
</body></html>
